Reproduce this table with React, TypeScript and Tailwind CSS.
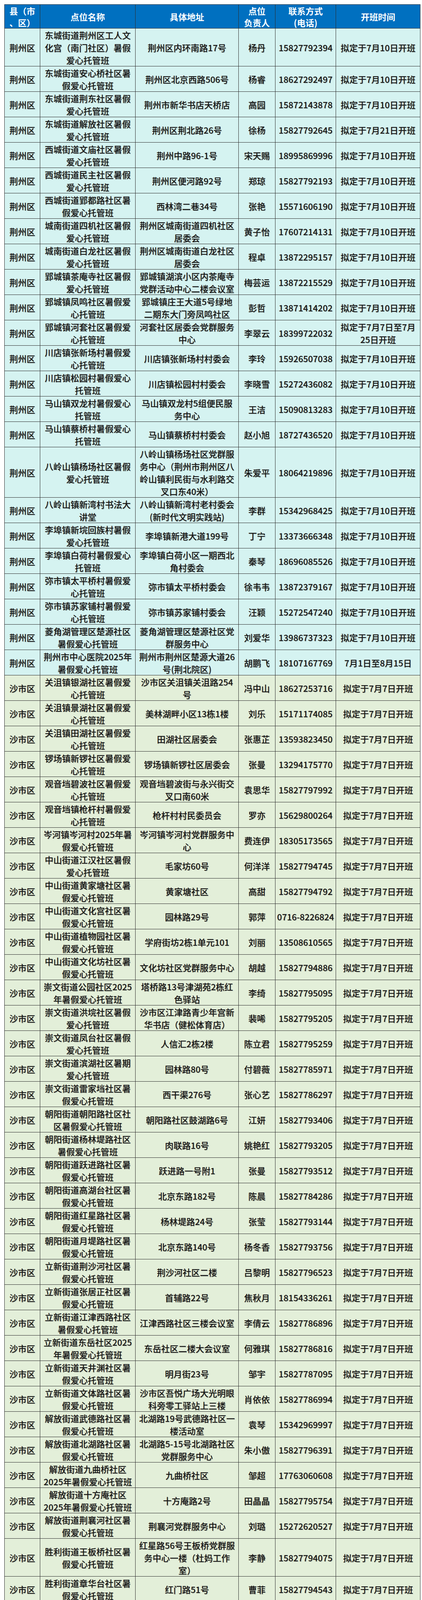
const J = '荆州区'
const S = '沙市区'
const T10 = '拟定于7月10日开班'
const T7 = '拟定于7月7日开班'

type Row = [string, string, string, string, string]

// [点位名称, 具体地址, 负责人, 电话, 开班时间]
const jingzhou: Row[] = [
  ['东城街道荆州区工人文\n化宫（南门社区）暑假\n爱心托管班', '荆州区内环南路17号', '杨丹', '15827792394', T10],
  ['东城街道安心桥社区暑\n假爱心托管班', '荆州区北京西路506号', '杨睿', '18627292497', T10],
  ['东城街道荆东社区暑假\n爱心托管班', '荆州市新华书店天桥店', '高园', '15872143878', T10],
  ['东城街道解放社区暑假\n爱心托管班', '荆州区荆北路26号', '徐杨', '15827792645', '拟定于7月21日开班'],
  ['西城街道文庙社区暑假\n爱心托管班', '荆州中路96-1号', '宋天赐', '18995869996', T10],
  ['西城街道民主社区暑假\n爱心托管班', '荆州区便河路92号', '郑琼', '15827792193', T10],
  ['西城街道郢都路社区暑\n假爱心托管班', '西林湾二巷34号', '张艳', '15571606190', T10],
  ['城南街道四机社区暑假\n爱心托管班', '荆州区城南街道四机社区\n居委会', '黄子怡', '17607214131', T10],
  ['城南街道白龙社区暑假\n爱心托管班', '荆州区城南街道白龙社区\n居委会', '程卓', '13872295157', T10],
  ['郢城镇茶庵寺社区暑假\n爱心托管班', '郢城镇湖滨小区内茶庵寺\n党群活动中心二楼会议室', '梅芸运', '13872215529', T10],
  ['郢城镇凤鸣社区暑假爱\n心托管班', '郢城镇庄王大道5号绿地\n二期东大门旁凤鸣社区', '彭哲', '13871414202', T10],
  ['郢城镇河套社区暑假爱\n心托管班', '河套社区居委会党群服务\n中心', '李翠云', '18399722032', '拟定于7月7日至7月\n25日开班'],
  ['川店镇张新场村暑假爱\n心托管班', '川店镇张新场村村委会', '李玲', '15926507038', T10],
  ['川店镇松园村暑假爱心\n托管班', '川店镇松园村村委会', '李晓雪', '15272436082', T10],
  ['马山镇双龙村暑假爱心\n托管班', '马山镇双龙村5组便民服\n务中心', '王洁', '15090813283', T10],
  ['马山镇蔡桥村暑假爱心\n托管班', '马山镇蔡桥村村委会', '赵小旭', '18727436520', T10],
  ['八岭山镇杨场社区暑假\n爱心托管班', '八岭山镇杨场社区党群服\n务中心（荆州市荆州区八\n岭山镇利民街与水利路交\n叉口东40米）', '朱爱平', '18064219896', T10],
  ['八岭山镇新湾村书法大\n讲堂', '八岭山镇新湾村老村委会\n(新时代文明实践站)', '李群', '15342968425', T10],
  ['李埠镇新垸回族村暑假\n爱心托管班', '李埠镇新港大道199号', '丁宁', '13373666348', T10],
  ['李埠镇白荷村暑假爱心\n托管班', '李埠镇白荷小区一期西北\n角村委会', '秦琴', '18696085526', T10],
  ['弥市镇太平桥村暑假爱\n心托管班', '弥市镇太平桥村委会', '徐韦韦', '13872379167', T10],
  ['弥市镇苏家铺村暑假爱\n心托管班', '弥市镇苏家铺村委会', '汪颖', '15272547240', T10],
  ['菱角湖管理区楚源社区\n暑假爱心托管班', '菱角湖管理区楚源社区党\n群服务中心', '刘爱华', '13986737323', T10],
  ['荆州市中心医院2025年\n暑假爱心托管班', '荆州市荆州区楚源大道26\n号(荆北院区)', '胡鹏飞', '18107167769', '7月1日至8月15日'],
]

const shashi: Row[] = [
  ['关沮镇银湖社区暑假爱\n心托管班', '沙市区关沮镇关沮路254\n号', '冯中山', '18627253716', T7],
  ['关沮镇景湖社区暑假爱\n心托管班', '美林湖畔小区13栋1楼', '刘乐', '15171174085', T7],
  ['关沮镇田湖社区暑假爱\n心托管班', '田湖社区居委会', '张惠芷', '13593823450', T7],
  ['锣场镇新锣社区暑假爱\n心托管班', '锣场镇新锣社区居委会', '张曼', '13294175770', T7],
  ['观音垱碧波社区暑假爱\n心托管班', '观音垱碧波街与永兴街交\n叉口南60米', '袁思华', '15827797992', T7],
  ['观音垱镇枪杆村暑假爱\n心托管班', '枪杆村村民委员会', '罗亦', '15629800264', T7],
  ['岑河镇岑河村2025年暑\n假爱心托管班', '岑河镇岑河村党群服务中\n心', '费连伊', '18305173565', T7],
  ['中山街道江汉社区暑假\n爱心托管班', '毛家坊60号', '何洋洋', '15827794745', T7],
  ['中山街道黄家塘社区暑\n假爱心托管班', '黄家塘社区', '高甜', '15827794792', T7],
  ['中山街道文化宫社区暑\n假爱心托管班', '园林路29号', '郭萍', '0716-8226824', T7],
  ['中山街道植物园社区暑\n假爱心托管班', '学府街坊2栋1单元101', '刘丽', '13508610565', T7],
  ['中山街道文化坊社区暑\n假爱心托管班', '文化坊社区党群服务中心', '胡越', '15827794886', T7],
  ['崇文街道公园社区2025\n年暑假爱心托管班', '塔桥路13号津湖苑2栋红\n色驿站', '李绮', '15827795095', T7],
  ['崇文街道洪垸社区暑假\n爱心托管班', '沙市区江津路青少年宫新\n华书店（健松体育店）', '裴唏', '15827795205', T7],
  ['崇文街道凤台社区暑假\n爱心托管班', '人信汇2栋2楼', '陈立君', '15827795259', T7],
  ['崇文街道滨湖社区暑期\n爱心托管班', '园林路80号', '付碧薇', '15827785971', T7],
  ['崇文街道雷家垱社区暑\n假爱心托管班', '西干渠276号', '张心艺', '15827786297', T7],
  ['朝阳街道朝阳路社区社\n区暑假爱心托管班', '朝阳路社区鼓湖路6号', '江妍', '15827793406', T7],
  ['朝阳街道杨林堤路社区\n暑假爱心托管班', '肉联路16号', '姚艳红', '15827793205', T7],
  ['朝阳街道跃进路社区暑\n假爱心托管班', '跃进路一号附1', '张曼', '15827793512', T7],
  ['朝阳街道高湖台社区暑\n假爱心托管班', '北京东路182号', '陈晨', '15827784286', T7],
  ['朝阳街道红星路社区暑\n假爱心托管班', '杨林堤路24号', '张莹', '15827793144', T7],
  ['朝阳街道月堤路社区暑\n假爱心托管班', '北京东路140号', '杨冬香', '15827793756', T7],
  ['立新街道荆沙河社区暑\n假爱心托管班', '荆沙河社区二楼', '吕黎明', '15827796523', T7],
  ['立新街道张居正社区暑\n假爱心托管班', '首辅路22号', '焦秋月', '18154336261', T7],
  ['立新街道江津西路社区\n暑假爱心托管班', '江津西路社区三楼会议室', '李倩云', '15827786896', T7],
  ['立新街道东岳社区2025\n年暑假爱心托管班', '东岳社区二楼大会议室', '何雅琪', '15827786816', T7],
  ['立新街道天井渊社区暑\n假爱心托管班', '明月街23号', '邹宇', '15827787095', T7],
  ['立新街道文体路社区暑\n假爱心托管班', '沙市区吾悦广场大光明眼\n科旁零工驿站上三楼', '肖依依', '15827786994', T7],
  ['解放街道武德路社区暑\n假爱心托管班', '北湖路19号武德路社区一\n楼活动室', '袁琴', '15342969997', T7],
  ['解放街道北湖路社区暑\n假爱心托管班', '北湖路5-15号北湖路社区\n党群服务中心', '朱小傲', '15827796391', T7],
  ['解放街道九曲桥社区\n2025年暑假爱心托管班', '九曲桥社区', '邹超', '17763060608', T7],
  ['解放街道十方庵社区\n2025年暑假爱心托管班', '十方庵路2号', '田晶晶', '15827795754', T7],
  ['解放街道荆襄河社区暑\n假爱心托管班', '荆襄河党群服务中心', '刘璐', '15272620527', T7],
  ['胜利街道王板桥社区暑\n假爱心托管班', '红星路56号王板桥党群服\n务中心一楼（杜妈工作\n室）', '李静', '15827794075', T7],
  ['胜利街道章华台社区暑\n假爱心托管班', '红门路51号', '曹菲', '15827794543', T7],
  ['胜利街道文星楼社区暑\n假爱心托管班', '胜利街171号', '倪歆玲', '15827794584', T7],
  ['胜利街道永红社区暑假\n爱心托管班', '北京中路286-28号', '袁世杰', '15827794376', T7],
  ['胜利街道蛇入山社区暑\n期爱心托管班', '长港路79号', '郑倩', '15827794197', T7],
  ['胜利街道红门路社区暑\n假爱心托管班', '缺口子路4号春晓花园内', '陶雪琴', '15827794607', T7],
  ['荆州市疾控中心\n2025年暑假爱心托管班', '荆州市沙市区清河路6号', '曾旻敏', '18972168061', T7],
  ['荆州市第二人民医院\n2025年暑假爱心托管班', '江津路中路241号', '张园', '18972162991', T7],
  ['荆州市中医医院2025年\n暑假爱心托管班', '江津东路172号', '王小莉', '18972168969', T7],
  ['市民之家爱心托管班', '沙市区园林北路与明珠大\n道交叉口', '胡石林', '15717215063', T7],
]

const headers = ['县（市\n、区）', '点位名称', '具体地址', '点位\n负责人', '联系方式\n(电话)', '开班时间']

// row height = number of text lines × 32px
const rowHeight: Record<number, string> = {
  1: 'h-[32px]',
  2: 'h-[64px]',
  3: 'h-[96px]',
  4: 'h-[128px]',
}

function HeadCell({ text }: { text: string }) {
  return (
    <div className="flex h-[60px] items-center justify-center overflow-hidden bg-[#0070c0] text-center text-[22px] font-bold leading-[30px] text-white whitespace-pre-line">
      {text}
    </div>
  )
}

function Cell({ text, bg, h }: { text: string; bg: string; h: string }) {
  return (
    <div
      className={`flex items-center justify-center overflow-hidden text-center text-[22px] font-medium leading-[32px] whitespace-pre-line text-shadow-[1px_1px_1px_rgba(0,0,0,0.28)] ${h} ${bg}`}
    >
      {text}
    </div>
  )
}

function DataRow({ district, row, bg }: { district: string; row: Row; bg: string }) {
  const lines = Math.max(...row.map((t) => t.split('\n').length), 2)
  const h = rowHeight[lines]
  return (
    <>
      <Cell text={district} bg={bg} h={h} />
      {row.map((t, i) => (
        <Cell key={i} text={t} bg={bg} h={h} />
      ))}
    </>
  )
}

export default function App() {
  return (
    <div className="h-[4618px] overflow-hidden bg-white pl-[11px] pt-[11px] font-['Noto_Sans_CJK_SC','Noto_Sans',sans-serif]">
      <div className="grid w-fit grid-cols-[90px_243px_263px_93px_154px_215px] gap-px border border-[#2e2e2e] bg-[#2e2e2e] text-[#161616]">
        {headers.map((h) => (
          <HeadCell key={h} text={h} />
        ))}
        {jingzhou.map((r, i) => (
          <DataRow key={`j${i}`} district={J} row={r} bg="bg-[#d5f3f1]" />
        ))}
        {shashi.map((r, i) => (
          <DataRow key={`s${i}`} district={S} row={r} bg="bg-[#e3efd9]" />
        ))}
      </div>
    </div>
  )
}
